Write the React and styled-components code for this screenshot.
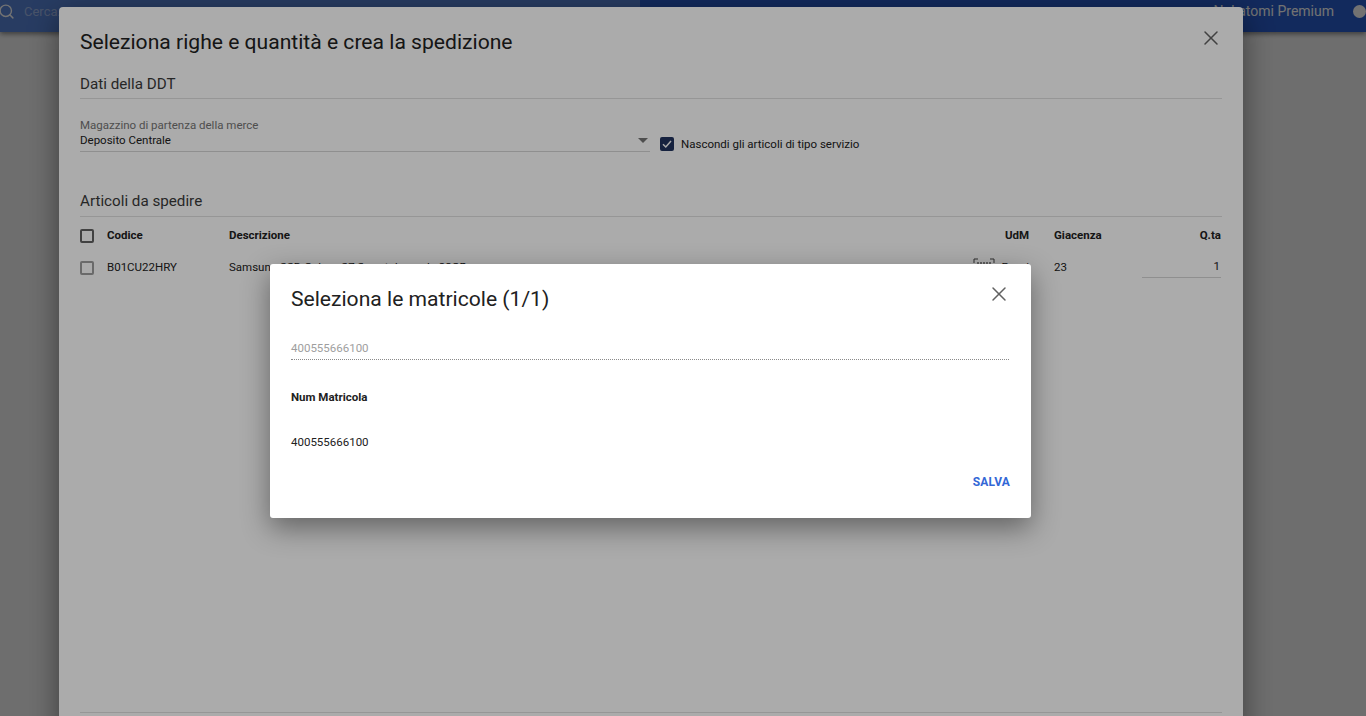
import React from "react";
import styled, { createGlobalStyle } from "styled-components";
import { X, Search } from "lucide-react";

const GlobalStyle = createGlobalStyle`
  html, body {
    margin: 0;
    height: 100%;
    overflow: hidden;
    background: #f7f7f7;
    font-family: Roboto, "Liberation Sans", sans-serif;
    color: #212121;
  }
  * {
    box-sizing: border-box;
  }
`;

const Page = styled.div`
  position: relative;
  width: 1366px;
  height: 716px;
  overflow: hidden;
`;

const TopBar = styled.header`
  display: flex;
  height: 32px;
  background: #2a5fd0;
  box-shadow: 0 2px 5px rgba(0, 0, 0, 0.45);
`;

const SearchField = styled.div`
  display: flex;
  align-items: center;
  gap: 9px;
  width: 640px;
  padding: 0 0 10px 0;
  background: #5a86dc;
  color: #fff;
  font-size: 13px;
`;

const SearchIcon = styled(Search)`
  margin-left: -2px;
`;

const SearchHint = styled.span`
  color: rgba(255, 255, 255, 0.45);
`;

const BarRight = styled.div`
  flex: 1;
  display: flex;
  justify-content: flex-end;
  align-items: flex-start;
  gap: 19px;
  padding: 2px 1px 0 0;
  color: #fff;
  font-size: 14px;
  line-height: 18px;
`;

const Avatar = styled.span`
  width: 13px;
  height: 13px;
  margin-top: 3px;
  margin-right: -1px;
  border-radius: 50%;
  background: #fff;
`;

const Scrim = styled.div`
  position: absolute;
  inset: 0;
  background: rgba(0, 0, 0, 0.33);
  padding: ${(p) => p.$top}px 0 0 ${(p) => p.$left}px;
`;

const ShipmentDialog = styled.section`
  display: flex;
  flex-direction: column;
  width: 1184px;
  height: 730px;
  padding: 0 21px;
  background: #fff;
  border-radius: 4px;
  box-shadow: 0 8px 30px rgba(0, 0, 0, 0.45);
`;

const DialogHead = styled.div`
  display: flex;
  justify-content: space-between;
  align-items: flex-start;
  height: ${(p) => p.$height}px;
  padding-top: 21px;
`;

const DialogTitle = styled.h2`
  margin: 0;
  font-size: 21.1px;
  line-height: 28px;
  font-weight: 400;
  color: #212121;
`;

const CloseButton = styled.span`
  display: flex;
  margin: ${(p) => p.$margin};
  color: #616161;
`;

const SectionTitle = styled.h3`
  margin: 0;
  height: 27px;
  padding-top: ${(p) => p.$shift || 0}px;
  font-size: 15.2px;
  line-height: 22px;
  font-weight: 400;
  color: #3a3a3a;
  border-bottom: 1px solid #e0e0e0;
`;

const WarehouseRow = styled.div`
  display: flex;
  align-items: flex-end;
  height: 53px;
  margin-bottom: 38px;
`;

const SelectField = styled.div`
  position: relative;
  width: 570px;
  height: 34px;
  border-bottom: 1px solid #d6d6d6;
  font-size: 11.5px;
  line-height: 14px;
`;

const FieldLabel = styled.div`
  color: #757575;
`;

const FieldValue = styled.div`
  margin-top: 1px;
  color: #212121;
`;

const Caret = styled.span`
  position: absolute;
  right: 2px;
  top: 20px;
  border-left: 5px solid transparent;
  border-right: 5px solid transparent;
  border-top: 5px solid #757575;
`;

const CheckOption = styled.div`
  display: flex;
  align-items: center;
  gap: 7px;
  height: 14px;
  margin: 0 0 1px 10px;
  font-size: 11.5px;
  color: #212121;
`;

const CheckBox = styled.div`
  flex: none;
  display: flex;
  align-items: center;
  justify-content: center;
  width: 14px;
  height: 14px;
  border-radius: 2px;
  border: 2px solid ${(p) => (p.$checked ? "#21335e" : p.$muted ? "#9e9e9e" : "#616161")};
  background: ${(p) => (p.$checked ? "#21335e" : "transparent")};
`;

const TableRow = styled.div`
  display: grid;
  grid-template-columns: 27px 122px 1fr 50px 25px 88px 79px;
  align-items: center;
  height: ${(p) => p.$height}px;
  padding-right: 1px;
  font-size: 11.5px;
  font-weight: ${(p) => (p.$head ? 700 : 400)};
  color: #212121;

  & > span {
    margin-bottom: 2px;
  }
`;

const RightCell = styled.span`
  text-align: right;
`;

const ProductCell = styled.span`
  position: relative;
  white-space: nowrap;
`;

const ScanIcon = styled.svg`
  position: absolute;
  right: -16px;
  top: -2px;
`;

const QtyCell = styled.span`
  height: 23px;
  padding: 3px 1px 0 0;
  text-align: right;
  line-height: 16px;
  color: #212121;
  border-bottom: 1px solid #d6d6d6;
  transform: translateY(-1px);
`;

const Spacer = styled.div`
  flex: 1;
`;

const DialogFoot = styled.div`
  height: 25px;
  border-top: 1px solid #e0e0e0;
`;

const SerialDialog = styled.section`
  width: 761px;
  height: 254px;
  padding: 0 21px;
  background: #fff;
  border-radius: 3px;
  box-shadow: 0 10px 28px rgba(0, 0, 0, 0.42);
`;

const SerialInput = styled.div`
  height: 19px;
  margin-right: 1px;
  font-size: 11.5px;
  line-height: 14px;
  color: #9e9e9e;
  border-bottom: 1px dotted #8a8a8a;
`;

const SerialHead = styled.div`
  margin-top: 30px;
  font-size: 11.5px;
  line-height: 14px;
  font-weight: 700;
`;

const SerialValue = styled.div`
  margin-top: 31px;
  font-size: 11.5px;
  line-height: 14px;
`;

const DialogActions = styled.div`
  display: flex;
  justify-content: flex-end;
  margin-top: 26px;
`;

const SaveButton = styled.span`
  font-size: 12px;
  line-height: 14px;
  font-weight: 700;
  color: #3367d6;
  letter-spacing: 0.2px;
`;

const App = () => (
  <Page>
    <GlobalStyle />
    <TopBar>
      <SearchField>
        <SearchIcon size={17} strokeWidth={2} />
        <SearchHint>Cerca...</SearchHint>
      </SearchField>
      <BarRight>
        <span>Nakatomi Premium</span>
        <Avatar />
      </BarRight>
    </TopBar>

    <Scrim $top={7} $left={59}>
      <ShipmentDialog>
        <DialogHead $height={65}>
          <DialogTitle>Seleziona righe e quantità e crea la spedizione</DialogTitle>
          <CloseButton $margin="-2px -1px 0 0">
            <X size={24} strokeWidth={1.5} />
          </CloseButton>
        </DialogHead>
        <SectionTitle $shift={1}>Dati della DDT</SectionTitle>
        <WarehouseRow>
          <SelectField>
            <FieldLabel>Magazzino di partenza della merce</FieldLabel>
            <FieldValue>Deposito Centrale</FieldValue>
            <Caret />
          </SelectField>
          <CheckOption>
            <CheckBox $checked>
              <svg width="10" height="10" viewBox="0 0 10 10" fill="none">
                <path d="M1 5.2 L3.8 8 L9 2" stroke="#fff" strokeWidth="1.5" />
              </svg>
            </CheckBox>
            Nascondi gli articoli di tipo servizio
          </CheckOption>
        </WarehouseRow>
        <SectionTitle>Articoli da spedire</SectionTitle>
        <TableRow $head $height={38}>
          <CheckBox />
          <span>Codice</span>
          <span>Descrizione</span>
          <RightCell>UdM</RightCell>
          <span />
          <span>Giacenza</span>
          <RightCell>Q.ta</RightCell>
        </TableRow>
        <TableRow $height={26}>
          <CheckBox $muted />
          <span>B01CU22HRY</span>
          <ProductCell>
            Samsung SSD Galaxy S7 Smartphone da 32GB
            <ScanIcon width="22" height="14" viewBox="0 0 22 14" fill="none" stroke="#444">
              <path d="M1 5 V1 H5 M17 1 H21 V5" />
              <path d="M5 4 V10 M8 4 V10 M11 4 V10 M14 4 V10 M17 4 V10" strokeWidth="1.2" />
            </ScanIcon>
          </ProductCell>
          <RightCell>Pezzi</RightCell>
          <span />
          <span>23</span>
          <QtyCell>1</QtyCell>
        </TableRow>
        <Spacer />
        <DialogFoot />
      </ShipmentDialog>
    </Scrim>

    <Scrim $top={264} $left={270}>
      <SerialDialog>
        <DialogHead $height={77}>
          <DialogTitle>Seleziona le matricole (1/1)</DialogTitle>
          <CloseButton $margin="-3px -1px 0 0">
            <X size={24} strokeWidth={1.5} />
          </CloseButton>
        </DialogHead>
        <SerialInput>400555666100</SerialInput>
        <SerialHead>Num Matricola</SerialHead>
        <SerialValue>400555666100</SerialValue>
        <DialogActions>
          <SaveButton>SALVA</SaveButton>
        </DialogActions>
      </SerialDialog>
    </Scrim>
  </Page>
);

export default App;
